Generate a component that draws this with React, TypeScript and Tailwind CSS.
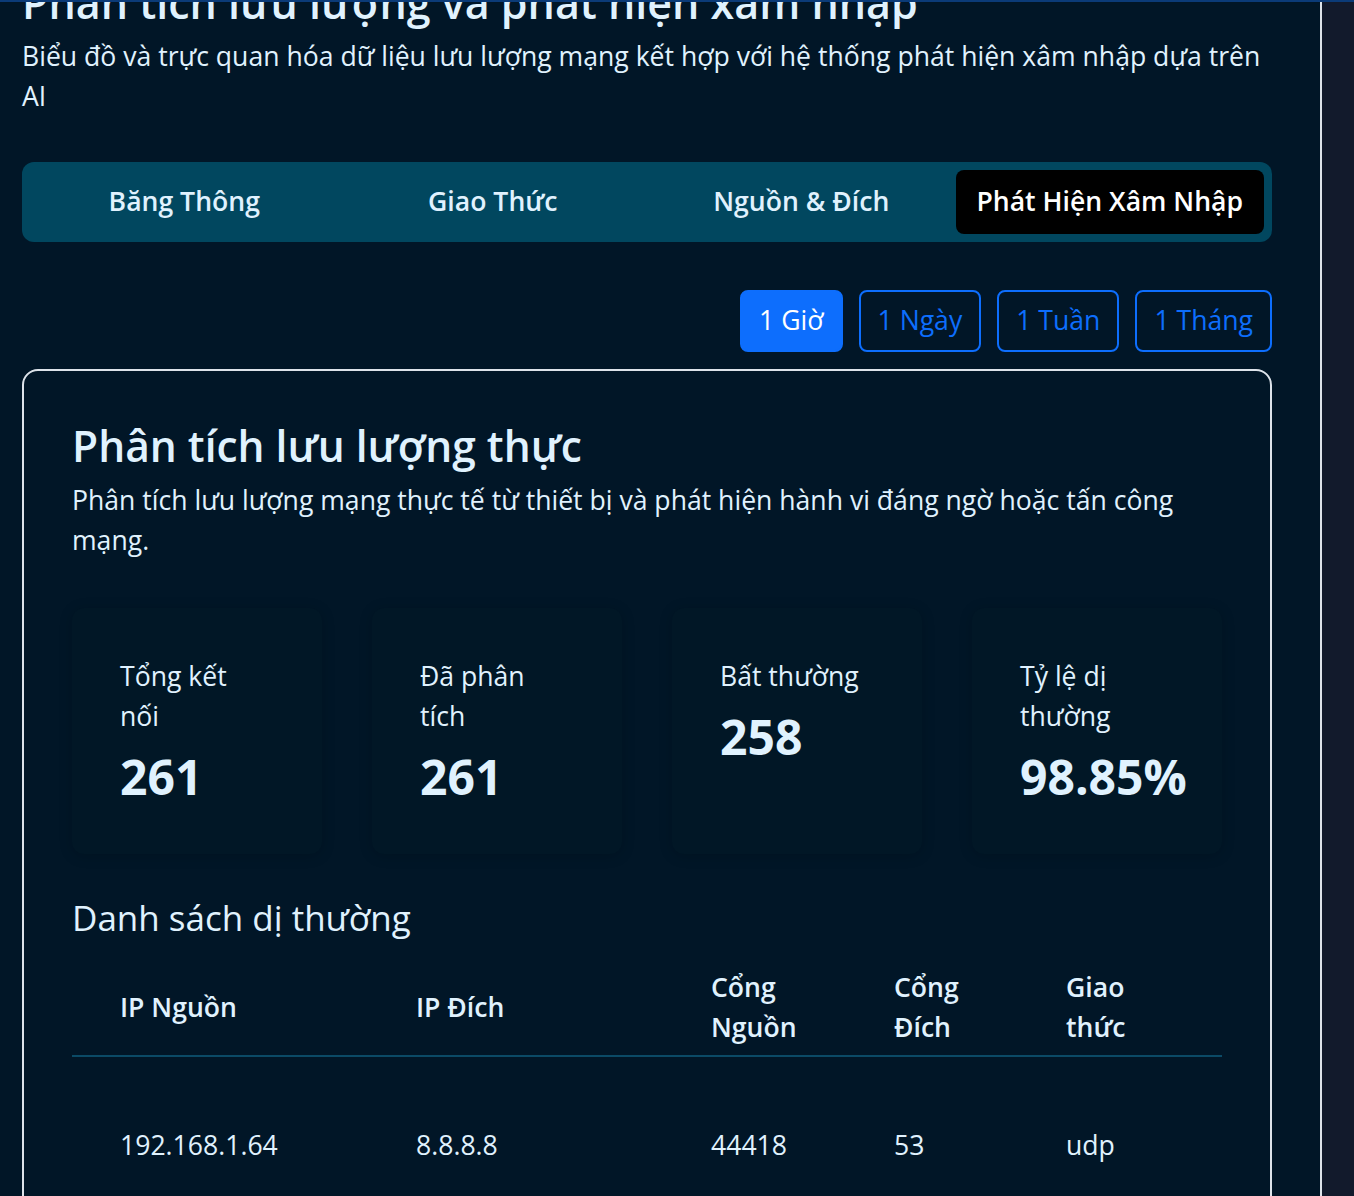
import React from "react";

const tabs = ["Băng Thông", "Giao Thức", "Nguồn & Đích", "Phát Hiện Xâm Nhập"];
const ranges = ["1 Giờ", "1 Ngày", "1 Tuần", "1 Tháng"];

const stats = [
  { label: "Tổng kết nối", value: "261" },
  { label: "Đã phân tích", value: "261" },
  { label: "Bất thường", value: "258" },
  { label: "Tỷ lệ dị thường", value: "98.85%" },
];

const columns = [
  { title: "IP Nguồn", width: "w-[296px]" },
  { title: "IP Đích", width: "w-[295px]" },
  { title: "Cổng Nguồn", width: "w-[183px]" },
  { title: "Cổng Đích", width: "w-[172px]" },
  { title: "Giao thức", width: "w-[204px]" },
];

const rows = [["192.168.1.64", "8.8.8.8", "44418", "53", "udp"]];

export default function App() {
  return (
    <div className="relative flex min-h-screen bg-[#011627] font-['Open_Sans',sans-serif] text-[#e0f2fe]">
      <div className="absolute inset-x-0 top-0 h-[2px] bg-[#0b3b78]" />
      <main className="w-[1322px] shrink-0 overflow-hidden border-r-2 border-[#dde3ea] pl-[22px] pr-[48px] pb-10">
        <h1 className="-mt-[22px] text-[43px] font-semibold leading-[50px]">
          Phân tích lưu lượng và phát hiện xâm nhập
        </h1>
        <p className="mt-2 text-[26.6px] leading-[40px]">
          Biểu đồ và trực quan hóa dữ liệu lưu lượng mạng kết hợp với hệ thống phát hiện xâm nhập dựa trên AI
        </p>

        <div className="mt-[46px] grid grid-cols-4 rounded-xl bg-[#01475f] p-2">
          {tabs.map((tab, i) => (
            <button
              key={tab}
              className={
                "h-16 rounded-lg text-[26.6px] font-semibold " +
                (i === 3 ? "bg-black text-white" : "text-[#e0f2fe]")
              }
            >
              {tab}
            </button>
          ))}
        </div>

        <div className="mt-12 flex justify-end gap-4">
          {ranges.map((r, i) => (
            <button
              key={r}
              className={
                "h-[62px] rounded-lg border-2 border-[#0d6efd] px-[17px] text-[26.6px] " +
                (i === 0 ? "bg-[#0d6efd] text-white" : "text-[#0d6efd]")
              }
            >
              {r}
            </button>
          ))}
        </div>

        <section className="mt-[17px] rounded-2xl border-2 border-[#dde3ea] px-12 pt-12 pb-16">
          <h2 className="text-[42.5px] font-semibold leading-[53px]">Phân tích lưu lượng thực</h2>
          <p className="mt-2 text-[26.6px] leading-[40px]">
            Phân tích lưu lượng mạng thực tế từ thiết bị và phát hiện hành vi đáng ngờ hoặc tấn công mạng.
          </p>

          <div className="mt-12 grid grid-cols-4 gap-[50px]">
            {stats.map((s) => (
              <div
                key={s.label}
                className="rounded-xl bg-[#011726] p-12 shadow-[0_2px_14px_rgba(0,0,0,0.16)]"
              >
                <div className="w-[145px] text-[26.6px] leading-[40px]">{s.label}</div>
                <div className="mt-3 text-[48px] font-bold leading-[58px]">{s.value}</div>
              </div>
            ))}
          </div>

          <h3 className="mt-[43px] text-[35px] font-medium leading-[41px]">Danh sách dị thường</h3>

          <table className="mt-[21px] w-full table-fixed text-left text-[26.6px] leading-[40px]">
            <thead>
              <tr className="border-b-2 border-[#0b4a66]">
                {columns.map((c) => (
                  <th key={c.title} className={c.width + " px-12 pt-2 pb-2 align-middle font-semibold"}>
                    {c.title}
                  </th>
                ))}
              </tr>
            </thead>
            <tbody>
              {rows.map((row) => (
                <tr key={row[0]}>
                  {row.map((cell, j) => (
                    <td key={j} className="px-12 pt-[68px] pb-12">
                      {cell}
                    </td>
                  ))}
                </tr>
              ))}
            </tbody>
          </table>
        </section>
      </main>
      <div className="flex-1 bg-[#121a2c]" />
    </div>
  );
}
